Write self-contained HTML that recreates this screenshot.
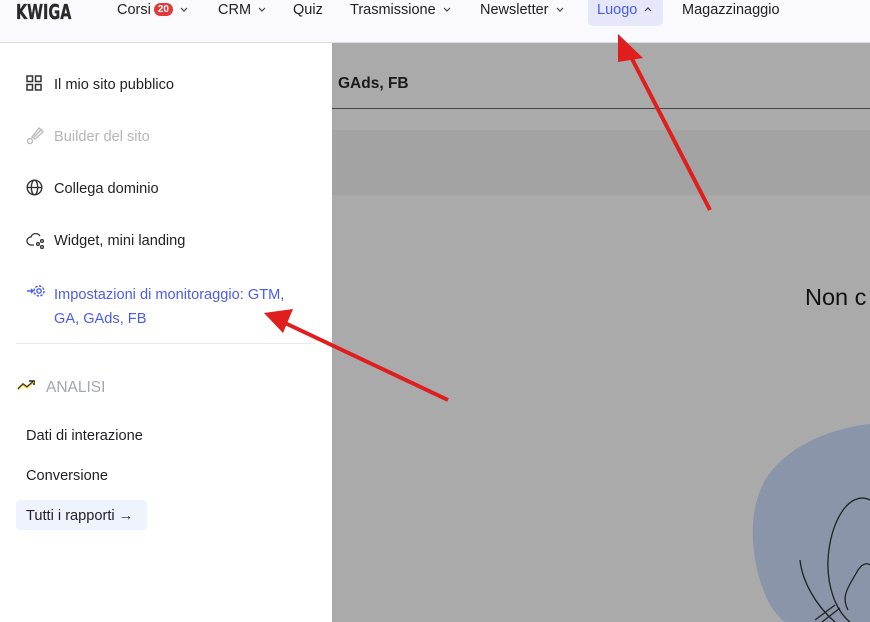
<!DOCTYPE html>
<html><head><meta charset="utf-8"><style>
*{margin:0;padding:0;box-sizing:border-box}
body{width:870px;height:622px;overflow:hidden;font-family:"Liberation Sans",sans-serif;background:#aaa;position:relative;color:#1f1f24}
.hdr{position:absolute;left:0;top:0;width:870px;height:43px;background:#f9f9fe;border-bottom:1px solid #dcdce6}
.logo{position:absolute;left:16px;top:0;font-weight:900;font-size:20px;color:#2a2a2a;font-family:"DejaVu Sans Condensed","Liberation Sans Narrow",sans-serif;transform:scaleX(.8);transform-origin:left;-webkit-text-stroke:.3px #2a2a2a}
.nav{position:absolute;top:2px;font-size:14.5px;color:#222}
.chev{display:inline-block;margin-left:7px;vertical-align:2px}
.badge{display:inline-block;background:#e03a3a;color:#fff;font-size:10px;font-weight:bold;border-radius:8px;padding:1px 4px;vertical-align:2px;margin-left:3px}
.side{position:absolute;left:0;top:43px;width:332px;height:579px;background:#fff}
.it{position:absolute;left:54px;font-size:14.6px;color:#222}
.ic{position:absolute;left:26px}
</style></head><body>
<div class="hdr">
<div class="logo">KWIGA</div>
<div class="nav" style="left:117px">Corsi<span class="badge">20</span><svg class="chev" width="8" height="5"><path d="M1 1 L4 4 L7 1" fill="none" stroke="#444" stroke-width="1.2"/></svg></div>
<div class="nav" style="left:218px">CRM<svg class="chev" width="8" height="5"><path d="M1 1 L4 4 L7 1" fill="none" stroke="#444" stroke-width="1.2"/></svg></div>
<div class="nav" style="left:293px">Quiz</div>
<div class="nav" style="left:350px">Trasmissione<svg class="chev" width="8" height="5"><path d="M1 1 L4 4 L7 1" fill="none" stroke="#444" stroke-width="1.2"/></svg></div>
<div class="nav" style="left:480px">Newsletter<svg class="chev" width="8" height="5"><path d="M1 1 L4 4 L7 1" fill="none" stroke="#444" stroke-width="1.2"/></svg></div>
<div style="position:absolute;left:588px;top:0;width:75px;height:26px;background:#e6e7fa;border-radius:0 0 5px 5px"></div>
<div class="nav" style="left:597px;color:#4a5cf0">Luogo<svg class="chev" width="8" height="5"><path d="M1 4 L4 1 L7 4" fill="none" stroke="#444" stroke-width="1.2"/></svg></div>
<div class="nav" style="left:682px">Magazzinaggio</div>
</div>
<div style="position:absolute;left:338px;top:75px;font-size:15.5px;font-weight:bold;color:#1a1a1a">GAds, FB</div>
<div style="position:absolute;left:332px;top:108px;width:538px;height:1px;background:#444"></div>
<div style="position:absolute;left:332px;top:130px;width:538px;height:65px;background:#a3a3a3"></div>
<div style="position:absolute;left:805px;top:284px;font-size:23.5px;color:#111">Non c</div>
<svg style="position:absolute;left:740px;top:420px" width="130" height="202">
<path d="M130 4 C90 8 30 30 17 80 C5 120 20 185 45 202 L130 202Z" fill="#8a95aa"/>
<g fill="none" stroke="#1d2620" stroke-width="1.3">
<path d="M130 80 C110 70 90 100 88 140 C87 165 95 190 110 202"/>
<path d="M60 140 C62 160 75 185 95 202"/>
<path d="M108 190 C100 175 110 165 118 150 C125 140 130 145 130 145"/>
<path d="M75 200 L95 185 M82 202 L100 188"/>
</g></svg>
<div class="side">
<svg class="ic" style="top:32px" width="16" height="16" fill="none" stroke="#333" stroke-width="1.5"><rect x="1" y="1" width="5.5" height="5.5"/><rect x="9.5" y="1" width="5.5" height="5.5"/><rect x="1" y="9.5" width="5.5" height="5.5"/><rect x="9.5" y="9.5" width="5.5" height="5.5"/></svg>
<div class="it" style="top:34px">Il mio sito pubblico</div>
<svg class="ic" style="top:84px" width="18" height="18" fill="none" stroke="#bbb" stroke-width="1.4"><path d="M16 2 L8 10 M13 1 L17 5 L9 12 L6 10Z"/><circle cx="4" cy="14" r="2.5"/></svg>
<div class="it" style="top:86px;color:#b5b5b5">Builder del sito</div>
<svg class="ic" style="top:136px" width="17" height="17" fill="none" stroke="#333" stroke-width="1.4"><circle cx="8.5" cy="8.5" r="7.3"/><ellipse cx="8.5" cy="8.5" rx="3.2" ry="7.3"/><path d="M1.2 8.5H15.8"/></svg>
<div class="it" style="top:138px">Collega dominio</div>
<svg class="ic" style="top:188px" width="20" height="18" fill="none" stroke="#333" stroke-width="1.3"><path d="M8 14 H5 A4 4 0 0 1 5 6 A5 5 0 0 1 14 5"/><circle cx="16" cy="10" r="1.4"/><circle cx="12" cy="13" r="1.4"/><circle cx="16" cy="16" r="1.4"/></svg>
<div class="it" style="top:190px">Widget, mini landing</div>
<svg class="ic" style="top:241px" width="20" height="16" fill="none" stroke="#4a5cf0" stroke-width="1.4"><path d="M1 7 H7 M5 5 L7 7 L5 9"/><circle cx="13" cy="7" r="2.2"/><circle cx="13" cy="7" r="5" stroke-dasharray="2.5 1.4"/></svg>
<div class="it" style="top:240px;color:#4a5cf0;line-height:24px">Impostazioni di monitoraggio: GTM,<br>GA, GAds, FB</div>
<div style="position:absolute;left:16px;top:300px;width:300px;height:1px;background:#ececef"></div>
<svg style="position:absolute;left:17px;top:336px" width="20" height="12" fill="none" stroke-width="1.6"><path d="M1 10 L6 5 L10 8 L17 2" stroke="#222"/><path d="M12 2 H17 V6" stroke="#222"/><path d="M1 11 L6 6 L10 9 L17 3" stroke="#e8c100" stroke-width="1"/></svg>
<div style="position:absolute;left:46px;top:336px;font-size:15.5px;color:#a3a7b3">ANALISI</div>
<div style="position:absolute;left:26px;top:385px;font-size:14.6px">Dati di interazione</div>
<div style="position:absolute;left:26px;top:425px;font-size:14.6px">Conversione</div>
<div style="position:absolute;left:16px;top:457px;width:131px;height:30px;background:#eef3fd;border-radius:4px;font-size:14.6px;padding:8px 0 0 10px">Tutti i rapporti →</div>
</div>
<svg style="position:absolute;left:0;top:0" width="870" height="622">
<g stroke="#e01e1e" stroke-width="4" fill="#e01e1e">
<line x1="710" y1="210" x2="630" y2="55"/>
<polygon points="618,34 643,58 618,62" stroke="none"/>
<line x1="448" y1="400" x2="285" y2="323"/>
<polygon points="264,313 293,309 283,333" stroke="none"/>
</g></svg>
</body></html>
